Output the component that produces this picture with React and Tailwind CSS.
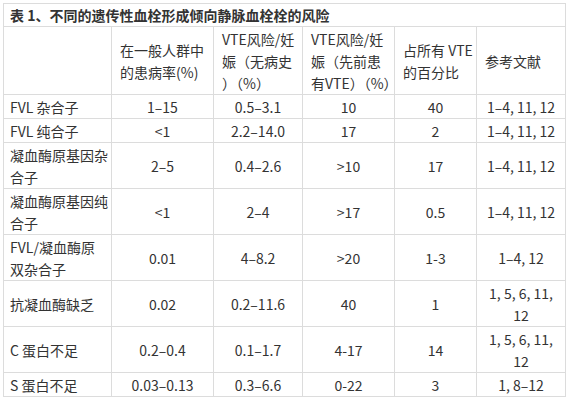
const rows = [
  { name: 'FVL 杂合子', vals: ['1–15', '0.5–3.1', '10', '40'], ref: '1–4, 11, 12' },
  { name: 'FVL 纯合子', vals: ['<1', '2.2–14.0', '17', '2'], ref: '1–4, 11, 12' },
  { name: ['凝血酶原基因杂', '合子'], vals: ['2–5', '0.4–2.6', '>10', '17'], ref: '1–4, 11, 12' },
  { name: ['凝血酶原基因纯', '合子'], vals: ['<1', '2–4', '>17', '0.5'], ref: '1–4, 11, 12' },
  { name: ['FVL/凝血酶原', '双杂合子'], vals: ['0.01', '4–8.2', '>20', '1-3'], ref: '1–4, 12' },
  { name: '抗凝血酶缺乏', vals: ['0.02', '0.2–11.6', '40', '1'], ref: ['1, 5, 6, 11,', '12'] },
  { name: 'C 蛋白不足', vals: ['0.2–0.4', '0.1–1.7', '4-17', '14'], ref: ['1, 5, 6, 11,', '12'] },
  { name: 'S 蛋白不足', vals: ['0.03–0.13', '0.3–6.6', '0-22', '3'], ref: '1, 8–12' },
];

const headers = [
  ['在一般人群中', '的患病率(%)'],
  ['VTE风险/妊', '娠（无病史', '）（%）'],
  ['VTE风险/妊', '娠（先前患', '有VTE）（%）'],
  ['占所有 VTE', '的百分比'],
  ['参考文献'],
];

function Lines({ text }) {
  const list = Array.isArray(text) ? text : [text];
  return list.map((t, i) => <div key={i}>{t}</div>);
}

const cell = 'border border-[#dcdcdc] px-2 pt-px align-middle whitespace-nowrap';

export default function App() {
  return (
    <div className="bg-white w-[571px] h-[400px] pt-[3px] pl-[3px] text-[14px] leading-[22px] text-[#333]" style={{ fontFamily: '"Noto Sans CJK SC", "Noto Sans", sans-serif' }}>
      <table className="border-collapse table-fixed w-[562px]">
        <colgroup>
          <col className="w-[108px]" />
          <col className="w-[102px]" />
          <col className="w-[89px]" />
          <col className="w-[92px]" />
          <col className="w-[82px]" />
          <col className="w-[89px]" />
        </colgroup>
        <tbody>
          <tr>
            <td colSpan={6} className={`${cell} font-bold leading-[21px] px-[6px]`}>表 1、不同的遗传性血栓形成倾向静脉血栓栓的风险</td>
          </tr>
          <tr>
            <td className={cell}></td>
            {headers.map((h, i) => (
              <td key={i} className={cell}><Lines text={h} /></td>
            ))}
          </tr>
          {rows.map((r, i) => (
            <tr key={i}>
              <td className={`${cell} px-[6px]`}><Lines text={r.name} /></td>
              {r.vals.map((v, j) => (
                <td key={j} className={`${cell} text-center`}>{v}</td>
              ))}
              <td className={`${cell} text-center`}><Lines text={r.ref} /></td>
            </tr>
          ))}
        </tbody>
      </table>
    </div>
  );
}
